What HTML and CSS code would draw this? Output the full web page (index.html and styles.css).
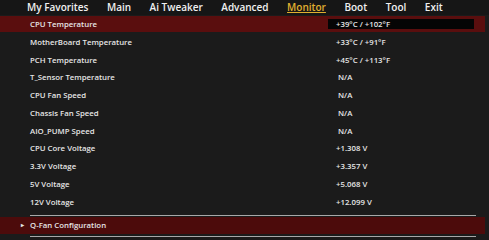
FILE: index.html
```html
<!DOCTYPE html>
<html lang="en">
<head>
    <meta charset="UTF-8">
    <title>Monitor</title>
    <link rel="stylesheet" href="styles.css">
</head>
<body>
    <div class="nav">
        <span class="tab">My Favorites</span>
        <span class="tab">Main</span>
        <span class="tab">Ai Tweaker</span>
        <span class="tab">Advanced</span>
        <span class="tab active">Monitor</span>
        <span class="tab">Boot</span>
        <span class="tab">Tool</span>
        <span class="tab">Exit</span>
    </div>

    <div class="list">
        <div class="row selected">
            <span class="name">CPU Temperature</span>
            <span class="value">+39°C / +102°F</span>
        </div>
        <div class="row"><span class="name">MotherBoard Temperature</span><span class="value">+33°C / +91°F</span></div>
        <div class="row"><span class="name">PCH Temperature</span><span class="value">+45°C / +113°F</span></div>
        <div class="row"><span class="name">T_Sensor Temperature</span><span class="value na">N/A</span></div>
        <div class="row"><span class="name">CPU Fan Speed</span><span class="value na">N/A</span></div>
        <div class="row"><span class="name">Chassis Fan Speed</span><span class="value na">N/A</span></div>
        <div class="row"><span class="name">AIO_PUMP Speed</span><span class="value na">N/A</span></div>
        <div class="row"><span class="name">CPU Core Voltage</span><span class="value">+1.308 V</span></div>
        <div class="row"><span class="name">3.3V Voltage</span><span class="value">+3.357 V</span></div>
        <div class="row"><span class="name">5V Voltage</span><span class="value">+5.068 V</span></div>
        <div class="row"><span class="name">12V Voltage</span><span class="value">+12.099 V</span></div>
    </div>

    <div class="sep"></div>
    <div class="submenu">
        <span class="arrow">&#9656;</span>
        <span>Q-Fan Configuration</span>
    </div>
    <div class="sep"></div>
</body>
</html>
```

FILE: styles.css
```css
body {
    margin: 0;
    background-color: #1b1b1b;
    color: #e6e6e6;
    font-family: 'Open Sans', 'Noto Sans', sans-serif;
    font-weight: 600;
    width: 489px;
    height: 240px;
    overflow: hidden;
}

.nav {
    display: flex;
    height: 15px;
    padding-left: 27px;
    background-color: #161616;
    font-size: 10px;
    line-height: 14px;
}
.tab {
    margin-right: 18.5px;
    color: #f0f0f0;
}
.tab.active {
    color: #e0b030;
    text-decoration: underline;
    text-underline-offset: 1px;
}

.list {
    display: flex;
    flex-direction: column;
    gap: 1.75px;
    margin-top: 1px;
}
.row {
    display: flex;
    align-items: center;
    height: 16px;
    width: 485px;
    font-size: 7.8px;
}
.name {
    width: 298px;
    padding-left: 30px;
}
.value {
    padding-left: 8px;
}
.value.na {
    padding-left: 10px;
}
.row.selected {
    background-color: #5a0e0e;
}
.row.selected .value {
    background-color: #050505;
    width: 138px;
    height: 10px;
    line-height: 10px;
}

.sep {
    width: 446px;
    height: 1px;
    margin-left: 30px;
    background-color: #a8a8a8;
}
.list + .sep {
    margin-top: 5px;
}
.submenu {
    display: flex;
    align-items: center;
    width: 485px;
    height: 17px;
    margin: 1px 0 2px;
    background-color: #4c0b0b;
    font-size: 7.8px;
}
.arrow {
    width: 9px;
    padding-left: 21px;
    font-size: 6px;
}
```
